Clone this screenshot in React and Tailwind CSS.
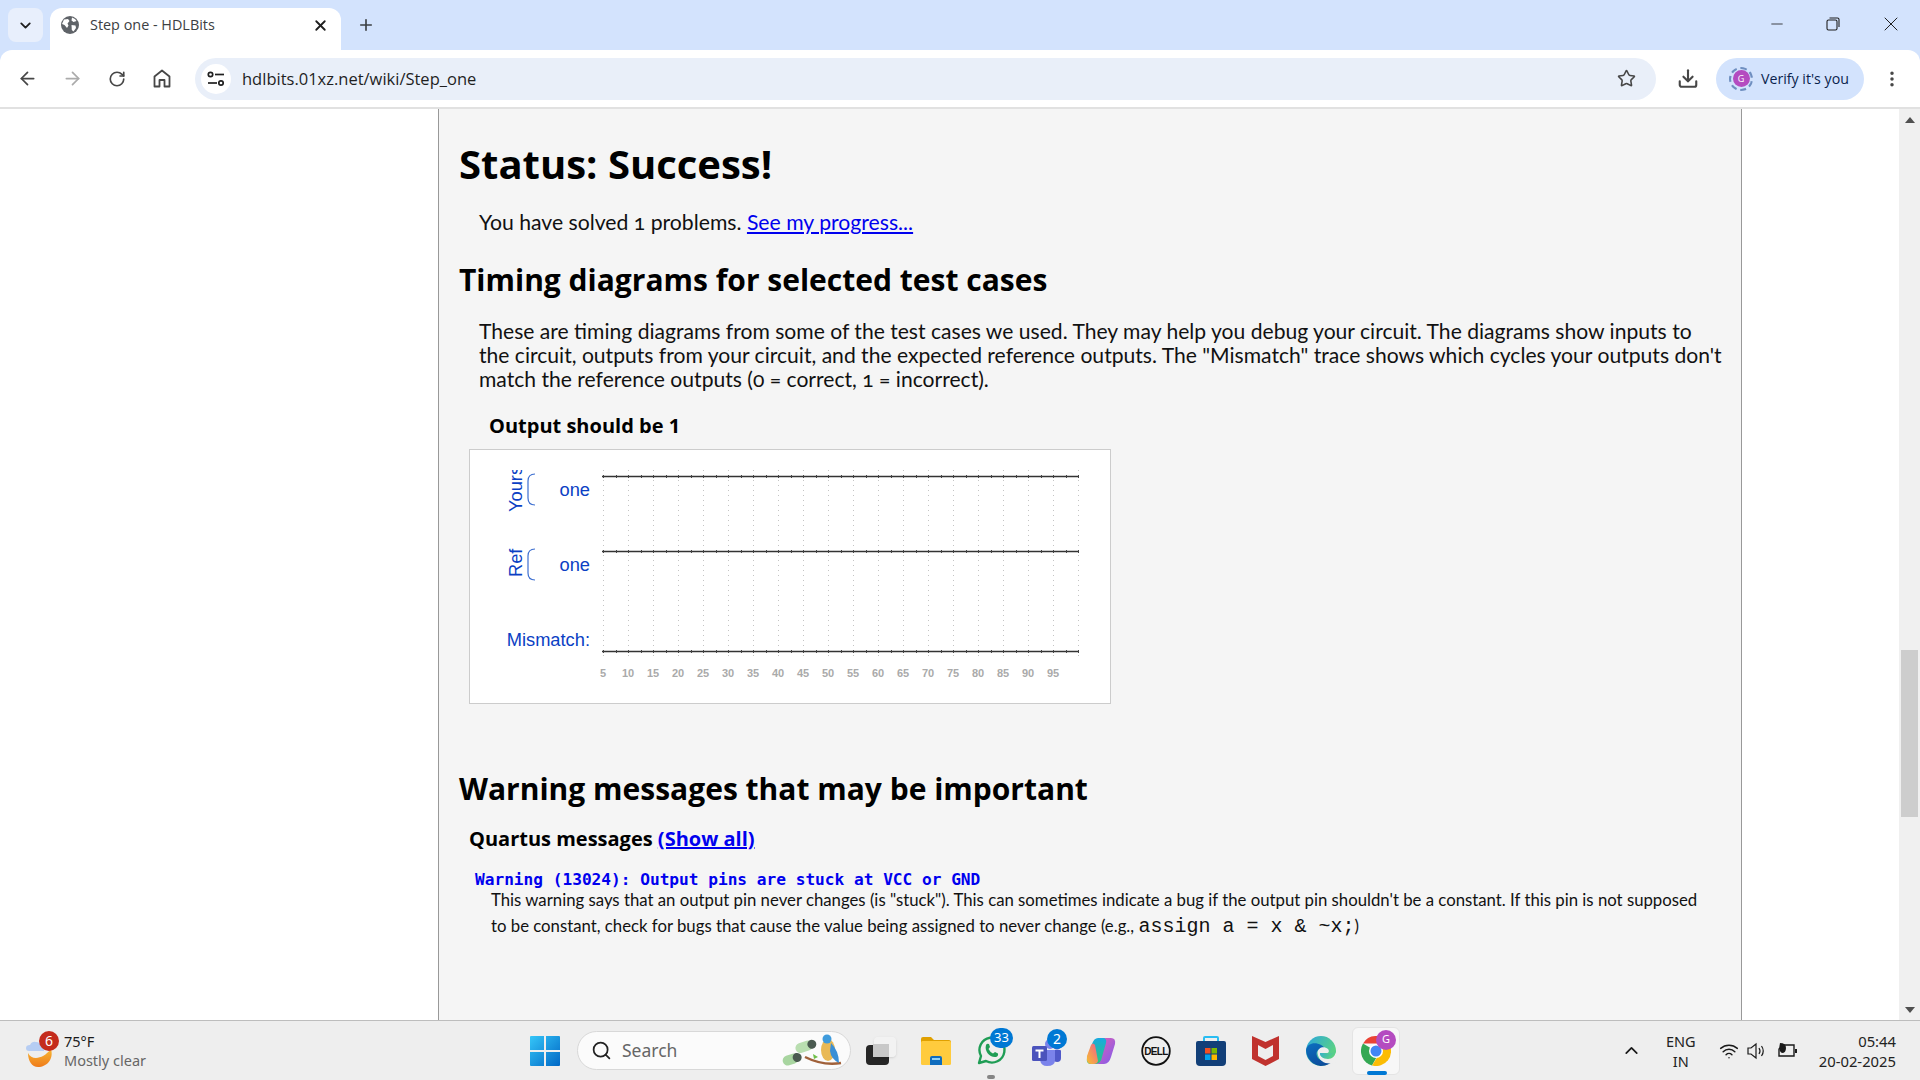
import React from "react";
import { ArrowLeft, ArrowRight, RotateCw, Star, Download, ChevronDown, ChevronUp, Plus, X, Minus, MoreVertical, Search, Wifi } from "lucide-react";

const ticks = [5,10,15,20,25,30,35,40,45,50,55,60,65,70,75,80,85,90,95];

function Chart() {
  const X0 = 133; // relative to the chart box
  const lines = [26, 101, 201];
  const xs = Array.from({ length: 20 }, (_, i) => X0 + 0.5 + i * 25);
  const minor = Array.from({ length: 39 }, (_, i) => X0 + i * 12.5);
  const blue = "#0b3fc4";
  return (
    <svg width="640" height="252" className="block">
      {xs.map((x) => (
        <line key={x} x1={x} x2={x} y1="20" y2="208" stroke="#c4c4c4" strokeWidth="1" strokeDasharray="1 4" />
      ))}
      {lines.map((y) => (
        <g key={y}>
          <line x1={X0 - 1} x2={X0 + 476} y1={y + 0.5} y2={y + 0.5} stroke="#333" strokeWidth="1.4" />
          {minor.map((x) => (
            <line key={x} x1={Math.round(x) + 0.5} x2={Math.round(x) + 0.5} y1={y - 1} y2={y + 2} stroke="#444" strokeWidth="1" />
          ))}
        </g>
      ))}
      <g fontFamily="'Liberation Sans', sans-serif" fill={blue} fontSize="18.3">
        <text x="120" y="46" textAnchor="end">one</text>
        <text x="120" y="121" textAnchor="end">one</text>
        <text x="120" y="196" textAnchor="end">Mismatch:</text>
        <svg x="30" y="20" width="24" height="48" overflow="hidden">
          <text transform="translate(22 42) rotate(-90)">Yours</text>
        </svg>
        <text transform="translate(52 127) rotate(-90)">Ref</text>
      </g>
      <path d="M65 24 Q58 24 58 31 V48 Q58 55 65 55" fill="none" stroke="#3d6fd0" strokeWidth="1.2" />
      <path d="M65 99 Q58 99 58 106 V123 Q58 130 65 130" fill="none" stroke="#3d6fd0" strokeWidth="1.2" />
      <g fontFamily="'Liberation Sans', sans-serif" fill="#aaa" fontSize="11" fontWeight="bold" textAnchor="middle">
        {ticks.map((t, i) => (
          <text key={t} x={X0 + i * 25} y="227">{t}</text>
        ))}
      </g>
    </svg>
  );
}

const Badge = ({ children, bg = "bg-[#0078d4]", cls = "" }) => (
  <span className={`absolute flex h-5 w-5 items-center justify-center rounded-full text-[14px] text-white ${bg} ${cls}`}>{children}</span>
);

const Slot = ({ children, className = "" }) => (
  <div className={`relative flex h-[48px] w-[55px] items-center justify-center ${className}`}>{children}</div>
);

export default function App() {
  return (
    <div className="flex h-[1080px] w-[1920px] flex-col overflow-hidden bg-white font-['Open_Sans',sans-serif]">
      {/* tab strip */}
      <div className="flex h-[50px] shrink-0 bg-[#d3e3fd]">
        <div className="ml-2 mt-2 flex h-[34px] w-[35px] items-center justify-center rounded-lg bg-[#e8effc]">
          <ChevronDown size={17} strokeWidth={2.6} color="#1f1f1f" />
        </div>
        <div className="relative ml-[7px] mt-2 flex h-[42px] w-[291px] items-center rounded-t-xl bg-white pb-2 pl-[11px] pr-[12px]">
          <svg width="18" height="18" viewBox="0 0 18 18">
            <circle cx="9" cy="9" r="9" fill="#5f6368" />
            <path d="M3 3.5 L7 3 L8.5 5 L6.5 7.5 L7.5 9.5 L6 12 L3.5 9 L1 8 Z M11 1.5 L14 3 L15.5 5 L12.5 6 L10.5 4.5 Z M10.5 9 L14.5 9.5 L15 12 L12.5 15.5 L10.8 14 Z" fill="#fff" />
          </svg>
          <span className="ml-[11px] flex-1 text-[14.4px] text-[#3c4043]">Step one - HDLBits</span>
          <X size={17} strokeWidth={2.6} color="#1f1f1f" />
        </div>
        <div className="ml-[16px] mt-[16px] h-[18px]"><Plus size={18} strokeWidth={2.2} color="#3c4043" /></div>
        <div className="flex-1" />
        <div className="flex h-[48px] w-[170px] items-center">
          <div className="flex w-[54px] justify-center"><Minus size={18} strokeWidth={1.1} color="#1f1f1f" /></div>
          <div className="flex w-[58px] justify-center">
            <svg width="14" height="14" viewBox="0 0 14 14" fill="none" stroke="#1f1f1f" strokeWidth="1.1">
              <rect x="1" y="3" width="10" height="10" rx="1.5" />
              <path d="M3.5 1 H11.5 Q13 1 13 2.5 V10" />
            </svg>
          </div>
          <div className="flex w-[58px] justify-center"><X size={24} strokeWidth={1} color="#1f1f1f" /></div>
        </div>
      </div>

      {/* toolbar */}
      <div className="flex h-[57px] shrink-0 items-center bg-[#d3e3fd]">
        <div className="flex h-full w-full items-center rounded-t-xl bg-white">
          <div className="ml-[16px] flex w-[22px] justify-center"><ArrowLeft size={21} strokeWidth={2} color="#474747" /></div>
          <div className="ml-[23px] flex w-[22px] justify-center"><ArrowRight size={21} strokeWidth={2} color="#ababab" /></div>
          <div className="ml-[23px] flex w-[22px] justify-center"><RotateCw size={18} strokeWidth={2.2} color="#474747" /></div>
          <div className="ml-[23px] flex w-[22px] justify-center">
            <svg width="18" height="19" viewBox="0 0 18 19" fill="none" stroke="#474747" strokeWidth="1.8" strokeLinejoin="round">
              <path d="M1.5 7.5 L9 1.5 L16.5 7.5 V17.5 H11.5 V11 H6.5 V17.5 H1.5 Z" />
            </svg>
          </div>
          <div className="ml-[22px] flex h-[42px] w-[1461px] items-center rounded-full bg-[#e9eff9] pl-[6px] pr-[20px]">
            <div className="flex h-[30px] w-[30px] items-center justify-center rounded-full bg-white">
              <svg width="18" height="16" viewBox="0 0 18 16" fill="none" stroke="#1f1f1f" strokeWidth="1.7">
                <circle cx="3.5" cy="3.5" r="2.2" />
                <path d="M8 3.5 H17" />
                <circle cx="14" cy="12" r="2.2" />
                <path d="M1 12 H10" />
              </svg>
            </div>
            <span className="ml-[11px] flex-1 pt-[2px] text-[16.5px] text-[#1f1f1f]">hdlbits.01xz.net/wiki/Step_one</span>
            <Star size={19} strokeWidth={2} color="#474747" />
          </div>
          <div className="ml-[21px] flex w-[22px] justify-center"><Download size={23} strokeWidth={2.3} color="#474747" /></div>
          <div className="ml-[17px] flex h-[42px] w-[148px] items-center rounded-full bg-[#d3e3fd] pl-[13px]">
            <div className="flex h-[24px] w-[24px] items-center justify-center rounded-full border-2 border-dashed border-[#6f8fc0]">
              <span className="flex h-[17px] w-[17px] items-center justify-center rounded-full bg-[#b44bc0] text-[9px] text-white">G</span>
            </div>
            <span className="ml-[8px] text-[14.2px] text-[#0a1f4d]">Verify it's you</span>
          </div>
          <div className="ml-[16px] flex w-[24px] justify-center"><MoreVertical size={20} strokeWidth={2.2} color="#474747" /></div>
        </div>
      </div>
      <div className="h-[2px] shrink-0 bg-[#e1e1e1]" />

      {/* page */}
      <div className="flex h-[911px] shrink-0 overflow-hidden">
        <div className="w-[438px] shrink-0 bg-white" />
        <div className="w-[1304px] shrink-0 border-x border-[#999] bg-[#f5f5f5] pl-[20px] pt-[27px] text-black">
          <h1 className="text-[40px] font-bold leading-[56px]">Status: Success!</h1>
          <p className="ml-[20px] mt-[18px] font-['Lato',sans-serif] text-[21.2px] leading-[24px] text-[#111] oldstyle-nums">
            You have solved 1 problems. <a className="text-[#0000ee] underline">See my progress...</a>
          </p>
          <h2 className="mt-[26px] text-[30px] font-bold leading-[40px]">Timing diagrams for selected test cases</h2>
          <p className="ml-[20px] mt-[19px] w-[1262px] font-['Lato',sans-serif] text-[21.1px] leading-[24px] text-[#111] oldstyle-nums">
            These are timing diagrams from some of the test cases we used. They may help you debug your circuit. The diagrams show inputs to<br />the circuit, outputs from your circuit, and the expected reference outputs. The "Mismatch" trace shows which cycles your outputs don't<br />match the reference outputs (0 = correct, 1 = incorrect).
          </p>
          <h3 className="ml-[30px] mt-[21px] text-[20px] font-bold leading-[27px]">Output should be 1</h3>
          <div className="ml-[10px] mt-[10px] h-[255px] w-[642px] border border-[#ccc] bg-white"><Chart /></div>
          <h2 className="mt-[65px] text-[30px] font-bold leading-[40px]">Warning messages that may be important</h2>
          <h3 className="ml-[10px] mt-[16px] text-[20px] font-bold leading-[27px]">
            Quartus messages <a className="text-[#0000ee] underline">(Show all)</a>
          </h3>
          <div className="ml-[16px] mt-[18px] font-['DejaVu_Sans_Mono',monospace] text-[16.15px] font-bold leading-[20px] text-[#0000ee]">Warning (13024): Output pins are stuck at VCC or GND</div>
          <p className="-mt-[3px] ml-[32px] w-[1250px] font-['Lato',sans-serif] text-[16.76px] leading-[26px] text-[#111]">
            This warning says that an output pin never changes (is "stuck"). This can sometimes indicate a bug if the output pin shouldn't be a constant. If this pin is not supposed<br />to be constant, check for bugs that cause the value being assigned to never change (e.g., <code className="font-['Liberation_Mono',monospace] text-[20px]">assign a = x &amp; ~x;</code>)
          </p>
        </div>
        <div className="flex-1 bg-white" />
        <div className="flex w-[21px] shrink-0 flex-col items-center bg-[#f0f0f0]">
          <div className="mt-[8px] h-0 w-0 border-x-[5px] border-b-[6px] border-x-transparent border-b-[#505050]" />
          <div className="mt-[527px] h-[167px] w-[17px] bg-[#cdcdcd]" />
          <div className="mt-[190px] h-0 w-0 border-x-[5px] border-t-[6px] border-x-transparent border-t-[#505050]" />
        </div>
      </div>

      {/* taskbar */}
      <div className="flex h-[60px] shrink-0 items-center border-t border-[#bdbdbd] bg-[#eeeeee] font-['Noto_Sans',sans-serif]">
        <div className="flex w-[505px] shrink-0 items-center pl-[25px]">
          <div className="relative h-[36px] w-[39px]">
            <svg width="30" height="34" viewBox="0 0 30 34" className="mt-[2px]">
              <defs>
                <linearGradient id="moon" x1="0" y1="0" x2="0" y2="1"><stop offset="0" stopColor="#f7b733" /><stop offset="1" stopColor="#ef7b1a" /></linearGradient>
              </defs>
              <path d="M3 18 C7 26 18 24 26 14 C29 24 22 32 13 32 C7 32 3 26 3 18 Z" fill="url(#moon)" />
              <path d="M4 16 Q1 16 1 13 Q1 10 5 10 Q7 6 11 7 Q15 7 16 11 Q20 12 19 16 Z" fill="#b6cdf3" />
            </svg>
            <Badge bg="bg-[#c42b1c]" cls="left-[14px] top-[-2px] !h-[20px] !w-[20px]">6</Badge>
          </div>
          <div className="text-[14.5px] leading-[19px]">
            <div className="text-[#1a1a1a]">75°F</div>
            <div className="text-[#666]">Mostly clear</div>
          </div>
        </div>
        <div className="flex w-[72px] shrink-0 justify-center pl-[8px]">
          <svg width="30" height="30" viewBox="0 0 30 30">
            <defs>
              <linearGradient id="win" x1="0" y1="0" x2="1" y2="1"><stop offset="0" stopColor="#35c6f8" /><stop offset="1" stopColor="#0067c5" /></linearGradient>
            </defs>
            <path d="M0 1 Q0 0 1 0 H14 V14 H0 Z M16 0 H29 Q30 0 30 1 V14 H16 Z M0 16 H14 V30 H1 Q0 30 0 29 Z M16 16 H30 V29 Q30 30 29 30 H16 Z" fill="url(#win)" />
          </svg>
        </div>
        <div className="flex h-[39px] w-[274px] shrink-0 items-center rounded-full border border-[#d8d8d8] bg-[#fbfbfb] pl-[13px]">
          <Search size={21} strokeWidth={2} color="#222" />
          <span className="ml-[10px] flex-1 text-[17.5px] text-[#666]">Search</span>
          <svg width="64" height="36" viewBox="0 0 64 36" className="mr-[5px]">
            <g transform="rotate(-18 20 20)">
              <rect x="0" y="18" width="16" height="10" rx="5" fill="#a8d5a0" />
              <rect x="16" y="10" width="18" height="10" rx="5" fill="#b9deb0" />
              <circle cx="15" cy="23" r="4.5" fill="#4a5a50" />
              <circle cx="33" cy="15" r="4.5" fill="#4a5a50" />
            </g>
            <path d="M24 24 Q42 33 60 30" stroke="#a0613a" strokeWidth="2.5" fill="none" />
            <ellipse cx="47" cy="17" rx="7" ry="11" fill="#e9b955" />
            <circle cx="46" cy="6" r="4.5" fill="#3f9bdc" />
            <path d="M50 10 Q58 18 58 30 Q50 26 49 18 Z" fill="#3a8fd6" />
            <path d="M32 21 L37 24 L33 26 Z" fill="#6fbf4a" />
          </svg>
        </div>
        <Slot className="ml-[2px] !w-[55px]">
          <div className="relative h-[28px] w-[30px]">
            <div className="absolute bottom-0 left-0 h-[20px] w-[23px] rounded-sm bg-[#262626]" />
            <div className="absolute right-0 top-0 h-[20px] w-[22px] rounded-sm bg-[#f2f2f2]/90 shadow-sm" />
            <div className="absolute left-[7px] top-[7px] h-[13px] w-[16px] bg-[#c8c8c8]" />
          </div>
        </Slot>
        <Slot>
          <svg width="30" height="28" viewBox="0 0 30 28">
            <path d="M0 2 Q0 0 2 0 H10 L13 3 H28 Q30 3 30 5 V10 H0 Z" fill="#e0a000" />
            <rect x="0" y="4" width="30" height="24" rx="1.5" fill="#ffcb3d" />
            <path d="M9 27.9 V21 Q9 19 11 19 H19 Q21 19 21 21 V27.9 Z" fill="#0f6cbd" />
            <rect x="11" y="21" width="8" height="2" fill="#8fd0f5" />
          </svg>
        </Slot>
        <Slot>
          <svg width="32" height="32" viewBox="0 0 32 32" fill="none">
            <path d="M4 28 L6 21 A12.5 12.5 0 1 1 11 26 Z" stroke="#1f9d55" strokeWidth="2.4" strokeLinejoin="round" />
            <path d="M11 10 Q12 8 14 9 L15 12 L13.5 14 Q15 17 18 18.5 L20 17 L23 18.5 Q23.5 21 21 22 C15 23 9 16 11 10 Z" fill="#1f9d55" />
          </svg>
          <Badge cls="left-[27px] top-[1px] !w-[23px] !text-[13px]">33</Badge>
          <span className="absolute bottom-[-4px] left-[24px] h-[4px] w-[8px] rounded-full bg-[#858585]" />
        </Slot>
        <Slot>
          <svg width="32" height="30" viewBox="0 0 32 30">
            <circle cx="20" cy="8" r="5" fill="#7b83eb" />
            <circle cx="27" cy="10" r="3.5" fill="#5059c9" />
            <path d="M22 14 H30 Q31 14 31 15 V22 Q31 26 27 26 Q24 26 23 24 Z" fill="#5059c9" />
            <path d="M10 14 H25 V24 Q25 30 17 30 Q11 30 10 24 Z" fill="#7b83eb" />
            <rect x="2" y="10" width="15" height="15" rx="1.5" fill="#4b53bc" />
            <path d="M5.5 13.5 H13.5 V15.5 H10.5 V22 H8.5 V15.5 H5.5 Z" fill="#fff" />
          </svg>
          <Badge cls="left-[29px] top-[2px]">2</Badge>
        </Slot>
        <Slot>
          <svg width="30" height="28" viewBox="0 0 30 28">
            <defs>
              <linearGradient id="c1" x1="0" y1="0" x2="0" y2="1"><stop offset="0" stopColor="#19a9e0" /><stop offset="1" stopColor="#2bc77b" /></linearGradient>
              <linearGradient id="c2" x1="0" y1="1" x2="1" y2="0"><stop offset="0" stopColor="#f7c02e" /><stop offset="1" stopColor="#ef5f8f" /></linearGradient>
              <linearGradient id="c3" x1="0" y1="0" x2="1" y2="1"><stop offset="0" stopColor="#e85fb0" /><stop offset="1" stopColor="#7a5cf0" /></linearGradient>
            </defs>
            <path d="M12 1 H19 Q22 1 22 5 L17 22 Q15 27 10 27 H5 Q0 27 1 21 L6 7 Q8 1 12 1 Z" fill="url(#c1)" />
            <path d="M1 19 L5 8 Q7 5 9 8 L12 24 Q11 27 8 27 H5 Q0 27 1 19 Z" fill="url(#c2)" />
            <path d="M18 1 H25 Q30 1 29 7 L25 20 Q23 27 18 27 H10 Q15 26 16 20 L20 6 Q21 2 18 1 Z" fill="url(#c3)" />
          </svg>
        </Slot>
        <Slot>
          <svg width="30" height="30" viewBox="0 0 30 30">
            <circle cx="15" cy="15" r="13.8" fill="none" stroke="#111" strokeWidth="1.8" />
            <text x="15" y="18.5" textAnchor="middle" fontFamily="'Liberation Sans',sans-serif" fontWeight="bold" fontSize="10" letterSpacing="-0.7" fill="#111">DELL</text>
          </svg>
        </Slot>
        <Slot>
          <svg width="30" height="30" viewBox="0 0 30 30">
            <path d="M8 6 V2 Q8 1 9 1 H21 Q22 1 22 2 V6" fill="none" stroke="#29bdf2" strokeWidth="2" />
            <path d="M0 7 Q0 5 2 5 H28 Q30 5 30 7 V26 Q30 30 26 30 H4 Q0 30 0 26 Z" fill="#123f78" />
            <rect x="9" y="12" width="5.5" height="5.5" fill="#f25022" />
            <rect x="15.5" y="12" width="5.5" height="5.5" fill="#7fba00" />
            <rect x="9" y="18.5" width="5.5" height="5.5" fill="#00a4ef" />
            <rect x="15.5" y="18.5" width="5.5" height="5.5" fill="#ffb900" />
          </svg>
        </Slot>
        <Slot>
          <svg width="27" height="30" viewBox="0 0 27 30">
            <path d="M0 0 L13.5 6 L27 0 V23 L13.5 30 L0 23 Z M6 9 V20 L13.5 24 L21 20 V9 L13.5 13 Z" fill="#c0322e" fillRule="evenodd" />
          </svg>
        </Slot>
        <Slot>
          <svg width="30" height="30" viewBox="0 0 30 30">
            <defs>
              <linearGradient id="e1" x1="0" y1="0" x2="1" y2="0.6"><stop offset="0" stopColor="#2aa5e0" /><stop offset="1" stopColor="#5fd67a" /></linearGradient>
              <linearGradient id="e2" x1="0" y1="0" x2="0.5" y2="1"><stop offset="0" stopColor="#0c6fc0" /><stop offset="1" stopColor="#0c4d9c" /></linearGradient>
            </defs>
            <circle cx="15" cy="15" r="15" fill="url(#e1)" />
            <path d="M0 14 C1 27 12 30 15 30 C21 30 26 27 28 23 C22 26 13 26 11 20 C9 15 14 10 20 14 C16 6 2 4 0 14 Z" fill="url(#e2)" />
            <path d="M11.5 17 C12 11 18 9.5 22 13 C23.5 15 23 17 20.5 17 L14 17 C13.5 21 19 24 28 20 L30 16 L30 26 C24 29 13 28 11.5 17 Z" fill="#eeeeee" />
            <path d="M20 17.5 C25 18 29 17 30 13 C30 20 26 23 22 23 C17 23 14 20 14 17 Z" fill="url(#e1)" />
          </svg>
        </Slot>
        <div className="relative ml-[4px] flex h-[48px] w-[48px] items-center justify-center rounded-md border border-[#e4e4e4] bg-[#f7f7f7]">
          <svg width="30" height="30" viewBox="0 0 30 30">
            <path d="M2 7.5 A15 15 0 0 1 28 7.5 H15 Z" fill="#ea4335" />
            <path d="M2 7.5 A15 15 0 0 0 11 29.5 L18 17 Z" fill="#34a853" />
            <path d="M28 7.5 A15 15 0 0 1 11 29.5 L20 15 Z" fill="#fbbc04" />
            <circle cx="15" cy="15" r="7" fill="#fff" />
            <circle cx="15" cy="15" r="5.5" fill="#4285f4" />
          </svg>
          <span className="absolute left-[23px] top-[2px] flex h-5 w-5 items-center justify-center rounded-full bg-[#b44bc0] text-[11px] text-white">G</span>
          <span className="absolute bottom-[-1px] left-[14px] h-[4px] w-[20px] rounded-full bg-[#0078d4]" />
        </div>
        <div className="flex-1" />
        <ChevronUp size={21} strokeWidth={2} color="#1a1a1a" />
        <div className="ml-[14px] w-[50px] text-center text-[14.5px] leading-[20px] text-[#222]">
          <div>ENG</div>
          <div>IN</div>
        </div>
        <div className="ml-[13px] flex items-center">
          <Wifi size={20} strokeWidth={1.8} color="#1a1a1a" />
          <svg width="22" height="20" viewBox="0 0 22 20" fill="none" stroke="#1a1a1a" strokeWidth="1.2" className="ml-[7px]">
            <path d="M2 7 H5 L10 3 V17 L5 13 H2 Z" />
            <path d="M13 7 Q15 10 13 13 M15.5 5 Q19 10 15.5 15" />
          </svg>
          <svg width="22" height="20" viewBox="0 0 22 20" className="ml-[9px]">
            <path d="M6 4 H17 V15 H2 V8 Z" fill="none" stroke="#1a1a1a" strokeWidth="1.4" />
            <rect x="18" y="8" width="2" height="4" fill="#1a1a1a" />
            <path d="M3 2 Q9 2 9 7 Q9 12 5 12 Q1 10 3 2 Z" fill="#1a1a1a" />
          </svg>
        </div>
        <div className="ml-[20px] mr-[24px] text-right text-[14.8px] leading-[20px] text-[#222]">
          <div>05:44</div>
          <div>20-02-2025</div>
        </div>
      </div>
    </div>
  );
}
